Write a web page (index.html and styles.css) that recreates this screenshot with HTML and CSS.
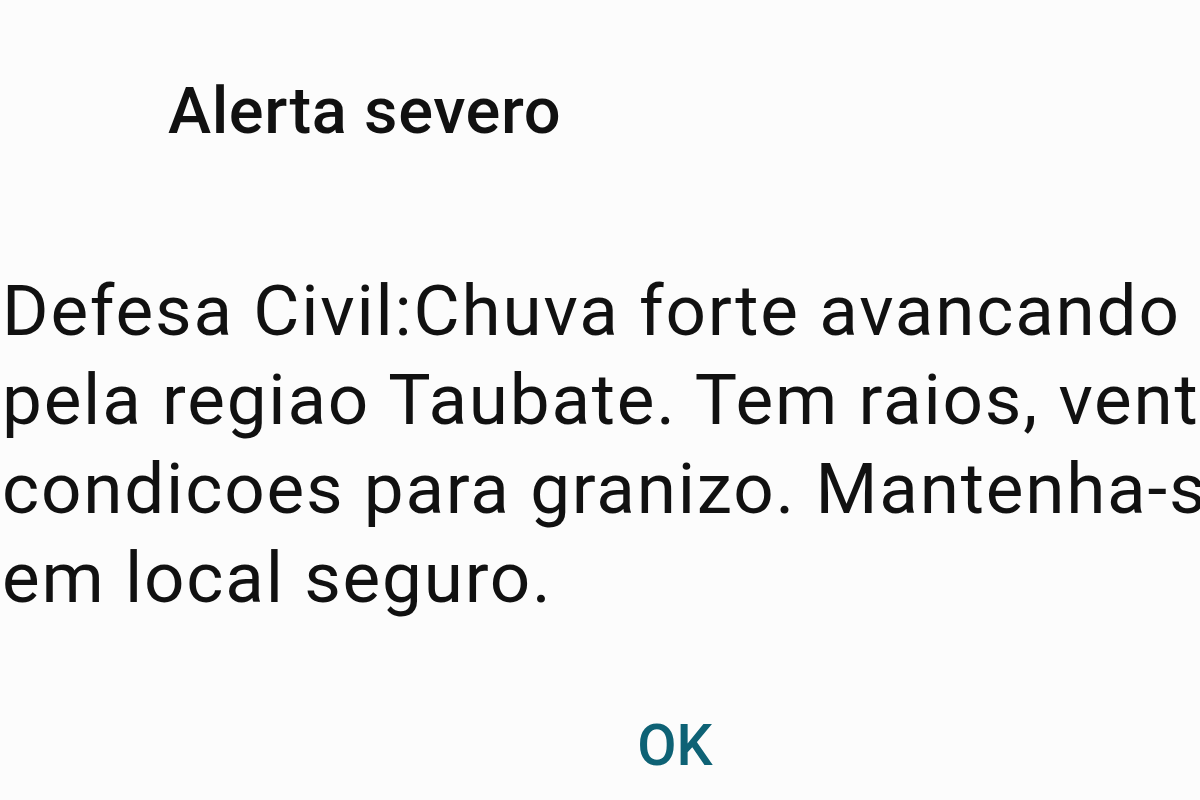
FILE: index.html
```html
<!DOCTYPE html>
<html lang="pt-BR">
<head>
    <meta charset="UTF-8">
    <title>Alerta severo</title>
    <link rel="stylesheet" href="styles.css">
</head>
<body>
    <div class="dialog">
        <h1 class="dialog-title">Alerta severo</h1>

        <p class="dialog-message">
            Defesa Civil:Chuva forte avancando<br>
            pela regiao Taubate. Tem raios, ventos e<br>
            condicoes para granizo. Mantenha-se<br>
            em local seguro.
        </p>

        <div class="dialog-actions">
            <button class="dialog-button">OK</button>
        </div>
    </div>
</body>
</html>
```

FILE: styles.css
```css
html, body {
    margin: 0;
    padding: 0;
    height: 100%;
    overflow: hidden;
}
body {
    background-color: #fcfcfc;
    color: #111;
    font-family: Roboto, "Noto Sans", sans-serif;
}
.dialog {
    display: flex;
    flex-direction: column;
    height: 100%;
}
.dialog-title {
    margin: 0;
    padding: 73px 0 0 168px;
    font-size: 65px;
    font-weight: 500;
    line-height: 76px;
    letter-spacing: 0.6px;
}
.dialog-message {
    margin: 0;
    padding: 117px 0 0 2px;
    font-size: 71px;
    line-height: 89px;
    letter-spacing: 1.8px;
    white-space: nowrap;
}
.dialog-actions {
    display: flex;
    justify-content: center;
    padding: 90px 0 0 150px;
}
.dialog-button {
    background: none;
    border: none;
    padding: 0;
    font-family: inherit;
    font-size: 57px;
    font-weight: 500;
    color: #0e6275;
    line-height: 67px;
}
```
